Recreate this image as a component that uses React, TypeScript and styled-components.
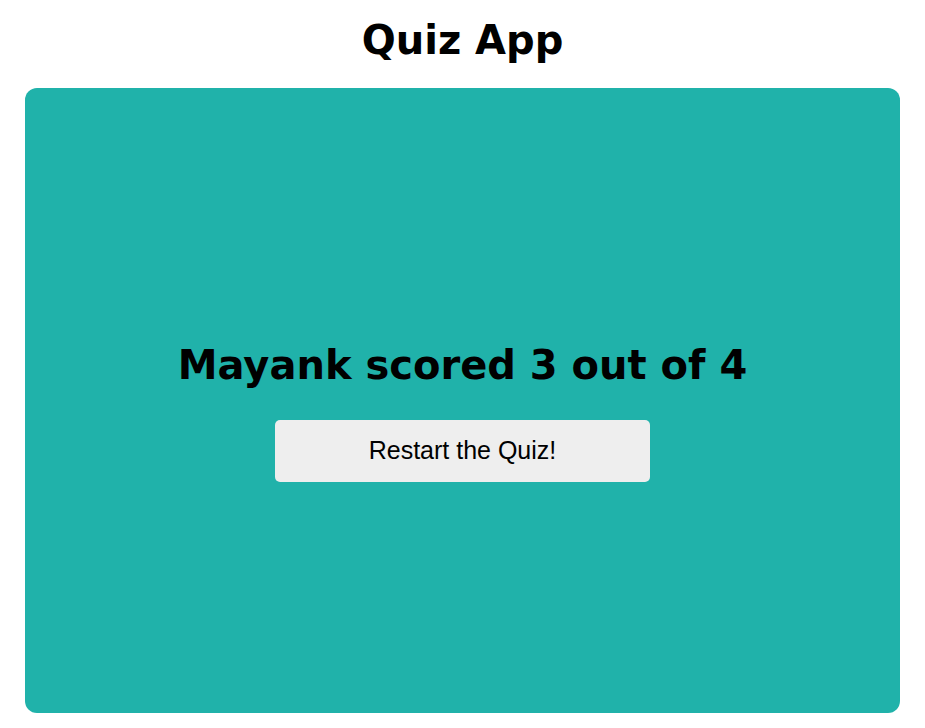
import React from "react";
import styled, { createGlobalStyle } from "styled-components";

const Global = createGlobalStyle`
  html, body { margin: 0; padding: 0; background: #fff; }
  body { font-family: "DejaVu Sans", Verdana, sans-serif; }
`;

const Page = styled.div`
  display: flex;
  flex-direction: column;
  align-items: center;
  padding: 0 25px 15px;
`;

const Title = styled.h1`
  font-family: "DejaVu Sans", Verdana, sans-serif;
  font-weight: bold;
  font-size: 40px;
  line-height: 46px;
  margin: 17px 0 25px;
  color: #000;
`;

const Card = styled.div`
  box-sizing: border-box;
  width: 100%;
  height: 625px;
  background: #20b2aa;
  border-radius: 12px;
  display: flex;
  flex-direction: column;
  align-items: center;
  justify-content: center;
  padding-top: 22px;
`;

const Score = styled.h2`
  font-family: "DejaVu Sans", Verdana, sans-serif;
  font-weight: bold;
  font-size: 40px;
  line-height: 46px;
  margin: 0 0 32px;
  color: #000;
`;

const RestartButton = styled.button`
  width: 375px;
  height: 62px;
  border: none;
  border-radius: 5px;
  background: #eeeeee;
  font-family: "Liberation Sans", Arial, sans-serif;
  font-size: 25px;
  color: #000;
  cursor: pointer;
`;

export default function App() {
  return (
    <>
      <Global />
      <Page>
        <Title>Quiz App</Title>
        <Card>
          <Score>Mayank scored 3 out of 4</Score>
          <RestartButton>Restart the Quiz!</RestartButton>
        </Card>
      </Page>
    </>
  );
}
